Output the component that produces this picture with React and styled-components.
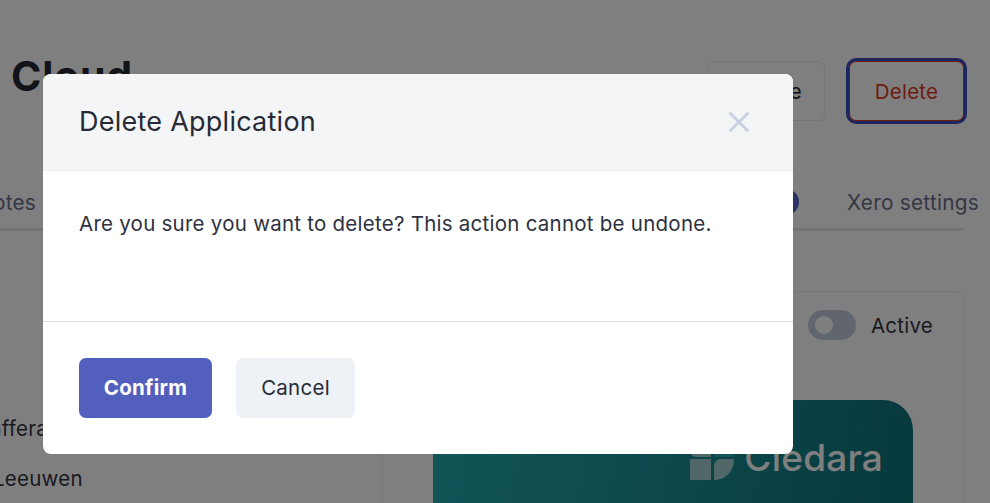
import React from "react";
import styled, { createGlobalStyle } from "styled-components";
import { X } from "lucide-react";

const GlobalStyle = createGlobalStyle`
  html, body {
    margin: 0;
    padding: 0;
    background: #fff;
  }
  * {
    box-sizing: border-box;
  }
  body {
    font-family: Inter, "Liberation Sans", sans-serif;
    letter-spacing: 0.25px;
    color: #2a2d3a;
  }
`;

const Page = styled.div`
  position: relative;
  width: 990px;
  height: 503px;
  overflow: hidden;
  background: #fff;
`;

const PageHeader = styled.header`
  display: flex;
  justify-content: space-between;
  align-items: flex-start;
  height: 121px;
  padding: 46px 26px 0 11px;
`;

const PageTitle = styled.h1`
  margin: 0;
  font-size: 41px;
  line-height: 60px;
  font-weight: 700;
  letter-spacing: 0.8px;
  color: #272833;
`;

const HeaderActions = styled.div`
  display: flex;
  gap: 24px;
  padding-top: 15px;
`;

const OutlineButton = styled.button`
  height: 60px;
  width: ${props => props.$width}px;
  border-radius: 7px;
  border: 1px solid ${props => (props.$danger ? "#d9381e" : "#e8eaf0")};
  background: #fff;
  font: 400 20.5px Inter, sans-serif;
  letter-spacing: 0.25px;
  color: ${props => (props.$danger ? "#d9381e" : "#1c1d26")};
  box-shadow: ${props => (props.$danger ? "0 0 0 3px #3d4cc0" : "none")};
`;

const TabBar = styled.nav`
  display: flex;
  justify-content: space-between;
  align-items: center;
  width: 964px;
  height: 110px;
  padding-top: 55px;
  border-bottom: 3px solid #e4e6ee;
`;

const TabLabel = styled.span`
  padding-top: 2px;
  font-size: 20.8px;
  line-height: 30px;
  color: #6b6f8a;
  white-space: nowrap;
`;

const LeadTab = styled(TabLabel)`
  margin-left: -23px;
`;

const TabGroup = styled.div`
  display: flex;
  align-items: center;
  gap: 48px;
  margin-right: -15px;
`;

const TabWithBadge = styled.div`
  display: flex;
  align-items: center;
  gap: 10px;
`;

const Badge = styled.span`
  display: flex;
  align-items: center;
  justify-content: center;
  width: 26px;
  height: 26px;
  border-radius: 50%;
  background: #5763c4;
  color: #fff;
  font-size: 14px;
`;

const Content = styled.div`
  display: flex;
  padding-top: 60px;
`;

const PeopleColumn = styled.div`
  width: 382px;
  flex: none;
  padding-top: 122px;
`;

const PersonRow = styled.div`
  height: 50px;
  font-size: 20.5px;
  line-height: 32px;
  margin-left: ${props => props.$offset}px;
  color: #333542;
  white-space: nowrap;
`;

const SettingsPanel = styled.section`
  width: 582px;
  height: 300px;
  border: 1px solid #eceef3;
  border-radius: 6px 6px 0 0;
  padding: 18px 30px 0 50px;
`;

const ToggleRow = styled.div`
  display: flex;
  justify-content: flex-end;
  align-items: center;
  gap: 15px;
  height: 30px;
`;

const ToggleTrack = styled.span`
  display: block;
  position: relative;
  width: 48px;
  height: 30px;
  border-radius: 15px;
  background: #c2cadb;
`;

const ToggleKnob = styled.span`
  position: absolute;
  top: 6px;
  left: 7px;
  width: 18px;
  height: 18px;
  border-radius: 50%;
  background: #fff;
`;

const ToggleText = styled.span`
  padding-top: 2px;
  font-size: 20.5px;
  line-height: 30px;
  color: #333542;
`;

const BrandCard = styled.div`
  display: flex;
  justify-content: flex-end;
  align-items: center;
  gap: 10px;
  width: 480px;
  height: 200px;
  margin-top: 60px;
  padding: 0 30px 84px 0;
  border-radius: 30px 30px 0 0;
  background: linear-gradient(100deg, #25acb0 0%, #0d7179 100%);
`;

const BrandName = styled.span`
  font-family: Inter, sans-serif;
  font-size: 37px;
  line-height: 48px;
  font-weight: 500;
  letter-spacing: 0.2px;
  color: #fff;
`;

const Overlay = styled.div`
  position: absolute;
  inset: 0;
  padding: 74px 0 0 43px;
  background: rgba(0, 0, 0, 0.5);
`;

const Modal = styled.div`
  display: flex;
  flex-direction: column;
  width: 750px;
  height: 380px;
  border-radius: 8px;
  overflow: hidden;
  background: #fff;
`;

const ModalHeader = styled.div`
  display: flex;
  justify-content: space-between;
  align-items: center;
  height: 97px;
  padding: 0 37px 0 36px;
  background: #f4f5f7;
  border-bottom: 1px solid #edeff2;
`;

const ModalTitle = styled.h2`
  margin: 0;
  font-size: 27px;
  line-height: 36px;
  font-weight: 400;
  color: #272b37;
`;

const CloseIcon = styled(X)`
  display: block;
  color: #c9d0e2;
`;

const ModalBody = styled.div`
  height: 151px;
  padding: 37px 36px 0;
  border-bottom: 1px solid #d9dee3;
  font-size: 20.5px;
  line-height: 32px;
  color: #2e3140;
`;

const ModalFooter = styled.div`
  display: flex;
  gap: 24px;
  padding: 36px;
`;

const ModalButton = styled.button`
  height: 60px;
  width: ${props => props.$width}px;
  padding: 0 0 2px;
  border: 0;
  border-radius: 7px;
  font: ${props => (props.$primary ? 700 : 400)} 20.5px Inter, sans-serif;
  letter-spacing: 0.25px;
  color: ${props => (props.$primary ? "#fff" : "#272b37")};
  background: ${props => (props.$primary ? "#535fbd" : "#eef1f6")};
`;

function CledaraMark() {
  return (
    <svg width="44" height="44" viewBox="0 0 44 44" aria-hidden="true">
      <path d="M0 0h21v21H6a6 6 0 0 1-6-6z" fill="#fff" fillOpacity="0.6" />
      <path d="M24 21V0h20v21z" fill="#22aab2" />
      <path d="M0 23h21v21H0z" fill="#fff" fillOpacity="0.6" />
      <path d="M24 44V30c0-4 3-7 7-7h13c0 12-8 21-20 21z" fill="#fff" fillOpacity="0.6" />
    </svg>
  );
}

export default function App() {
  return (
    <Page>
      <GlobalStyle />
      <PageHeader>
        <PageTitle>Cloud</PageTitle>
        <HeaderActions>
          <OutlineButton $width={118}>Update</OutlineButton>
          <OutlineButton $width={115} $danger>
            Delete
          </OutlineButton>
        </HeaderActions>
      </PageHeader>
      <TabBar>
        <LeadTab>Notes</LeadTab>
        <TabGroup>
          <TabWithBadge>
            <TabLabel>Tasks</TabLabel>
            <Badge>3</Badge>
          </TabWithBadge>
          <TabLabel>Xero settings</TabLabel>
        </TabGroup>
      </TabBar>
      <Content>
        <PeopleColumn>
          <PersonRow $offset={-10}>afferata</PersonRow>
          <PersonRow $offset={-7}>Leeuwen</PersonRow>
        </PeopleColumn>
        <SettingsPanel>
          <ToggleRow>
            <ToggleTrack>
              <ToggleKnob />
            </ToggleTrack>
            <ToggleText>Active</ToggleText>
          </ToggleRow>
          <BrandCard>
            <CledaraMark />
            <BrandName>Cledara</BrandName>
          </BrandCard>
        </SettingsPanel>
      </Content>
      <Overlay>
        <Modal>
          <ModalHeader>
            <ModalTitle>Delete Application</ModalTitle>
            <CloseIcon size={34} strokeWidth={2} />
          </ModalHeader>
          <ModalBody>
            Are you sure you want to delete? This action cannot be undone.
          </ModalBody>
          <ModalFooter>
            <ModalButton $primary $width={133}>
              Confirm
            </ModalButton>
            <ModalButton $width={119}>Cancel</ModalButton>
          </ModalFooter>
        </Modal>
      </Overlay>
    </Page>
  );
}
